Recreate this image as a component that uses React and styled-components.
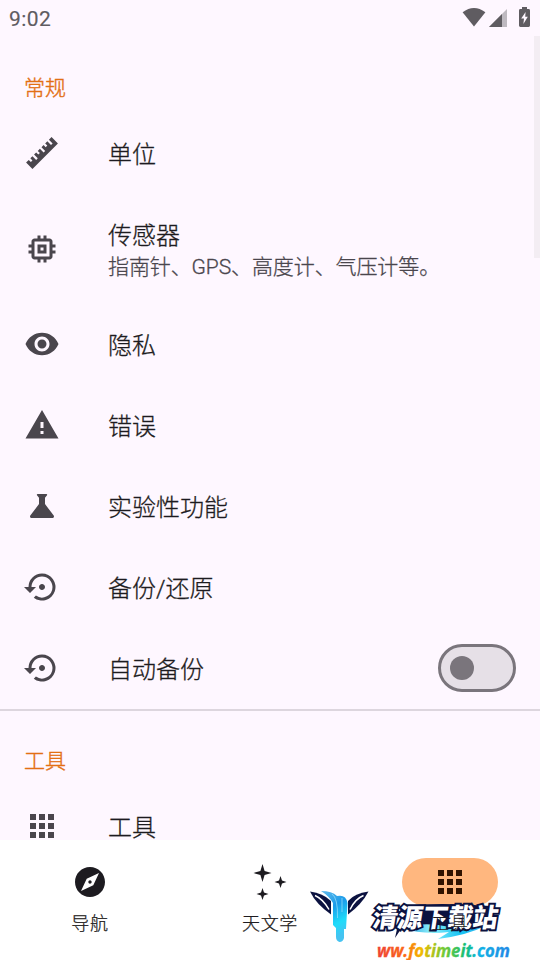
import React, { useState } from 'react';
import styled, { createGlobalStyle } from 'styled-components';
import {
    MdMemory, MdRemoveRedEye, MdWarning, MdScience, MdSettingsBackupRestore, MdApps, MdExplore
} from 'react-icons/md';

const colors = {
    background: '#fef7ff',
    bar: '#ffffff',
    accent: '#e36f14',
    text: '#1d1b20',
    secondary_text: '#4a464d',
    status: '#5f5c61',
    outline: '#7a757c',
    pill: '#ffb77f',
    pill_icon: '#311300',
    navy: '#0b1240'
}

const GlobalStyle = createGlobalStyle`
    body {
        margin: 0;
        background: ${colors.background};
        font-family: Roboto, "Noto Sans CJK SC", sans-serif;
        overflow: hidden;
    }
    svg {
        display: block;
        flex: none;
    }
`

const Screen = styled.div`
    position: relative;
    display: flex;
    flex-direction: column;
    width: 540px;
    height: 960px;
    overflow: hidden;
    background: ${colors.background};
    color: ${colors.text};
`

const StatusBar = styled.header`
    display: flex;
    justify-content: space-between;
    height: 36px;
    flex: none;
    padding: 0 9px;
    box-sizing: border-box;
    color: ${colors.status};
`

const Clock = styled.span`
    font-size: 21px;
    font-weight: 400;
    line-height: 38px;
    letter-spacing: 0.4px;
    -webkit-text-stroke: 0.15px ${colors.status};
`

const Settings = styled.main`
    position: relative;
    flex: 1;
    min-height: 0;
    overflow: hidden;
`

const ScrollThumb = styled.div`
    position: absolute;
    top: 0;
    right: 0;
    width: 6px;
    height: 222px;
    background: #f3edf3;
`

const Category = styled.h2`
    margin: 0;
    padding: ${props => props.$compact ? '34px 24px 9px' : '36px 24px 9px'};
    height: 32px;
    line-height: 32px;
    font-size: 21px;
    font-weight: 300;
    -webkit-text-stroke: 0.4px currentColor;
    color: ${colors.accent};
`

const Row = styled.div`
    display: flex;
    align-items: center;
    height: ${props => props.$tall ? 110 : 81}px;
    padding: 0 24px;
`

const RowIcon = styled.div`
    width: 84px;
    flex: none;
    margin-bottom: ${props => props.$tall ? 0 : 2}px;
    color: ${colors.secondary_text};
`

const RowText = styled.div`
    flex: 1;
    padding-top: 3px;
    font-weight: 300;
    -webkit-text-stroke: 0.3px currentColor;
`

const Title = styled.div`
    font-size: 24px;
    line-height: 32px;
`

const Summary = styled.div`
    font-size: 21px;
    line-height: 30px;
    letter-spacing: -0.1px;
    color: ${colors.secondary_text};
`

const Switch = styled.button`
    display: flex;
    align-items: center;
    width: 78px;
    height: 48px;
    margin-bottom: 2px;
    padding: 0 9px;
    border: 3px solid ${colors.outline};
    border-radius: 24px;
    background: #e6e0e7;
    justify-content: ${props => props.$on ? 'flex-end' : 'flex-start'};
`

const Thumb = styled.span`
    width: 24px;
    height: 24px;
    border-radius: 50%;
    background: ${colors.outline};
`

const Divider = styled.div`
    height: 2px;
    background: #ddd6de;
`

const NavBar = styled.nav`
    display: grid;
    grid-template-columns: repeat(3, 1fr);
    flex: none;
    height: 120px;
    background: ${colors.bar};
`

const NavItem = styled.div`
    display: flex;
    flex-direction: column;
    align-items: center;
    padding-top: 18px;
`

const NavPill = styled.div`
    display: flex;
    align-items: center;
    justify-content: center;
    width: 96px;
    height: 48px;
    border-radius: 24px;
    background: ${props => props.$active ? colors.pill : 'transparent'};
    color: ${props => props.$active ? colors.pill_icon : colors.text};
`

const NavLabel = styled.span`
    position: relative;
    z-index: 1;
    margin-top: 5px;
    font-size: 18px;
    line-height: 26px;
    letter-spacing: 0.7px;
    font-weight: 300;
    -webkit-text-stroke: ${props => props.$active ? 0 : 0.25}px currentColor;
`

const Watermark = styled.div`
    position: absolute;
    left: 306px;
    top: 884px;
`

const RulerIcon = () => (
    <svg width="36" height="36" viewBox="0 0 24 24" fill="currentColor">
        <path d="M1.39,18.36L3.16,16.6L4.58,18L5.64,16.95L4.22,15.54L5.64,14.12L8.11,16.6L9.17,15.54L6.7,13.06L8.11,11.65L9.53,13.06L10.59,12L9.17,10.59L10.59,9.17L13.06,11.65L14.12,10.59L11.65,8.11L13.06,6.7L14.47,8.11L15.54,7.05L14.12,5.64L15.54,4.22L18,6.7L19.07,5.64L16.6,3.16L18.36,1.39L22.61,5.64L5.64,22.61L1.39,18.36Z" />
    </svg>
)

const StarsIcon = () => (
    <svg width="36" height="36" viewBox="0 0 36 36" fill="currentColor">
        <path d="M10.5 0L12.6 6.9L19.5 9L12.6 11.1L10.5 18L8.4 11.1L1.5 9L8.4 6.9Z" />
        <path d="M28.5 12L30 16.5L34.5 18L30 19.5L28.5 24L27 19.5L22.5 18L27 16.5Z" />
        <path d="M10.5 24L12 28.5L16.5 30L12 31.5L10.5 36L9 31.5L4.5 30L9 28.5Z" />
    </svg>
)

const StatusIcons = () => (
    <svg width="70" height="36" viewBox="461 0 70 36" fill="currentColor">
        <path d="M462.6 12.3Q474 3.6 485.4 12.3L474 26.6Z" />
        <path d="M489 27L507 9V27Z" opacity="0.4" />
        <path d="M489 27L502 14V27Z" />
        <path fillRule="evenodd" d="M522 7H527V9H528.6Q530 9 530 10.4V25.6Q530 27 528.6 27H520.4Q519 27 519 25.6V10.4Q519 9 520.4 9H522ZM525.6 12L521.2 18.6H524L523.4 24L527.8 16.8H525.2Z" />
    </svg>
)

const WatermarkArt = () => (
    <svg width="234" height="76" viewBox="306 884 234 76">
        <defs>
            <linearGradient id="stem" x1="0" y1="0" x2="0.3" y2="1">
                <stop offset="0" stopColor="#62b9ea" />
                <stop offset="0.4" stopColor="#1b9cea" />
                <stop offset="0.75" stopColor="#1fdcfa" />
                <stop offset="1" stopColor="#45c3f1" />
            </linearGradient>
            <linearGradient id="wave" x1="0" x2="1">
                <stop offset="0" stopColor="#1593d8" />
                <stop offset="0.35" stopColor="#8df0fc" />
                <stop offset="0.7" stopColor="#16c3f3" />
                <stop offset="1" stopColor="#35b3ee" />
            </linearGradient>
            <linearGradient id="site" x1="0" x2="1">
                <stop offset="0" stopColor="#ee4136" />
                <stop offset="0.22" stopColor="#fb6a18" />
                <stop offset="0.33" stopColor="#f4b900" />
                <stop offset="0.5" stopColor="#76c934" />
                <stop offset="0.67" stopColor="#16bd79" />
                <stop offset="0.76" stopColor="#12b5e4" />
                <stop offset="1" stopColor="#2485e5" />
            </linearGradient>
        </defs>
        <path fill={colors.navy} d="M310 891.5Q323 893 331 901V914.5Q316 904 310 891.5Z" />
        <path fill={colors.navy} d="M368.5 891.5Q355 893 348 901V914.5Q362 904 368.5 891.5Z" />
        <path d="M315 895.5Q323 899 329 909.5M363.5 895.5Q355 899 350 909.5" fill="none" stroke="#fff" strokeWidth="1.5" />
        <path fill="url(#stem)" d="M321 891Q332 891 337 896Q346 894 347.5 903L346 929H344V938Q343 942 339.5 942Q336 941 336 937V928L333 925V903Q329 896 321 891Z" />
        <path d="M332 894Q338 898 337.5 918M342 898V912" fill="none" stroke="#8fdcfa" strokeWidth="0.8" />
        <path fill={colors.navy} d="M400 906Q440 902 490 906L495 918L484 927H402Z" />
        <path fill="url(#wave)" d="M402 928Q424 921 450 927L485 926Q468 935 438 939L449 932Q422 935 402 928Z" />
        <path fill={colors.navy} d="M392 924L403 926L395 938L397 929Z" />
        <g transform="translate(371.5 926.5) skewX(-9)">
            <text fontFamily="'Noto Sans CJK SC', sans-serif" fontSize="26" fontWeight="900" textLength="125" lengthAdjust="spacingAndGlyphs" fill="#fff" stroke={colors.navy} strokeWidth="4" paintOrder="stroke" strokeLinejoin="miter" strokeMiterlimit="2">清源下载站</text>
        </g>
        <text x="377" y="956.5" fontFamily="'Open Sans', sans-serif" fontSize="18" fontStyle="italic" fontWeight="700" textLength="133" lengthAdjust="spacingAndGlyphs" fill="url(#site)" stroke="url(#site)" strokeWidth="0.3">ww.fotimeit.com</text>
    </svg>
)

const general = [
    { title: '单位', icon: <RulerIcon /> },
    { title: '传感器', summary: '指南针、GPS、高度计、气压计等。', icon: <MdMemory size={36} /> },
    { title: '隐私', icon: <MdRemoveRedEye size={36} /> },
    { title: '错误', icon: <MdWarning size={36} /> },
    { title: '实验性功能', icon: <MdScience size={36} /> },
    { title: '备份/还原', icon: <MdSettingsBackupRestore size={36} /> },
    { title: '自动备份', icon: <MdSettingsBackupRestore size={36} />, toggle: true }
]

const tabs = [
    { label: '导航', icon: <MdExplore size={36} /> },
    { label: '天文学', icon: <StarsIcon /> },
    { label: '工具', icon: <MdApps size={36} /> }
]

const Preference = (props) => (
    <Row $tall={!!props.summary}>
        <RowIcon $tall={!!props.summary}>{props.icon}</RowIcon>
        <RowText>
            <Title>{props.title}</Title>
            {props.summary && <Summary>{props.summary}</Summary>}
        </RowText>
        {props.children}
    </Row>
)

export default function App(){
    const [autoBackup, setAutoBackup] = useState(false)
    const [activeTab, setActiveTab] = useState(2)

    const handleTabClick = v => () => {
        setActiveTab(v)
    }

    return(
        <Screen>
            <GlobalStyle />
            <StatusBar>
                <Clock>9:02</Clock>
                <StatusIcons />
            </StatusBar>
            <Settings>
                <Category>常规</Category>
                {general.map((item) => (
                    <Preference key={item.title} title={item.title} summary={item.summary} icon={item.icon}>
                        {item.toggle && <Switch $on={autoBackup} onClick={() => setAutoBackup(!autoBackup)}><Thumb /></Switch>}
                    </Preference>
                ))}
                <Divider />
                <Category $compact>工具</Category>
                <Preference title="工具" icon={<MdApps size={36} />} />
                <ScrollThumb />
            </Settings>
            <NavBar>
                {tabs.map((tab, index) => (
                    <NavItem key={tab.label} onClick={handleTabClick(index)}>
                        <NavPill $active={index === activeTab}>{tab.icon}</NavPill>
                        <NavLabel $active={index === activeTab}>{tab.label}</NavLabel>
                    </NavItem>
                ))}
            </NavBar>
            <Watermark><WatermarkArt /></Watermark>
        </Screen>
    )
}
